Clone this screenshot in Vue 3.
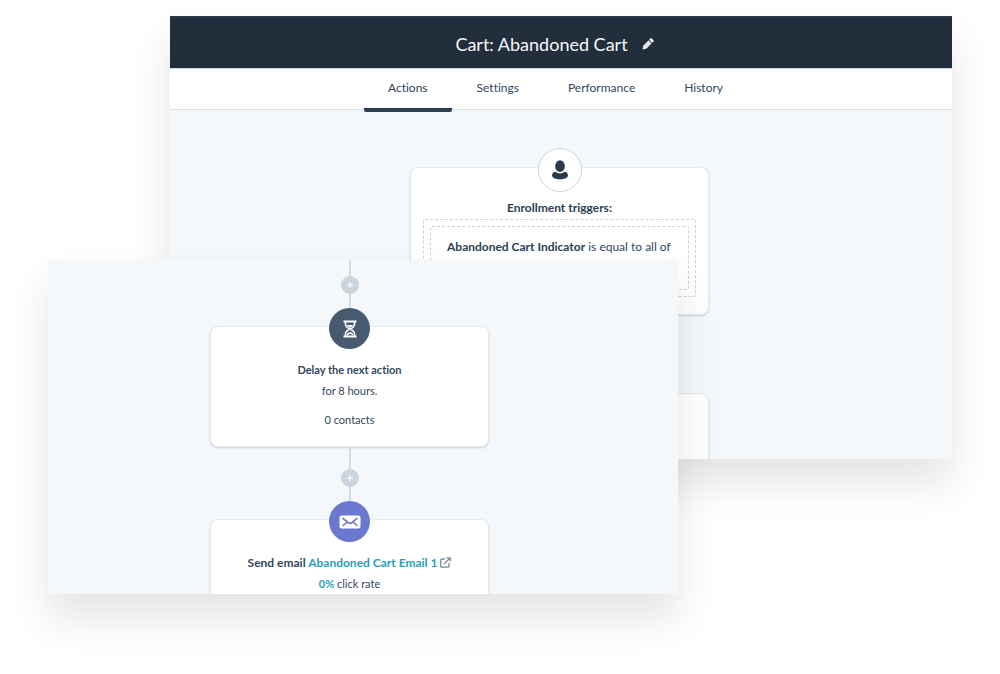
<script setup>
const tabs = [
  { label: 'Actions', active: true },
  { label: 'Settings', active: false },
  { label: 'Performance', active: false },
  { label: 'History', active: false },
]
</script>

<template>
  <main class="stage">
    <section class="panel workflow">
      <header class="title-bar">
        <h1>Cart: Abandoned Cart</h1>
        <button class="edit" type="button" aria-label="Edit name">
          <svg viewBox="0 0 12 12" width="12" height="12">
            <path d="M.5 11.500l1-4 5-5 3 3-5 5z" fill="#fff" />
            <path d="M7.200 1.800l1-1c.6-.6 1.300-.6 1.900 0l1.100 1.100c.6.6.6 1.300 0 1.900l-1 1z" fill="#fff" />
            <path d="M3 8l4.200-4.200M4.200 9.200L8.400 5" stroke="#8792a0" stroke-width=".6" />
          </svg>
        </button>
      </header>
      <nav class="tabs">
        <a v-for="tab in tabs" :key="tab.label" href="#" :class="{ active: tab.active }">{{ tab.label }}</a>
      </nav>
      <div class="canvas">
        <article class="card trigger">
          <span class="badge person">
            <svg viewBox="0 0 18 20" width="18" height="20">
              <ellipse cx="9" cy="6.200" rx="4.800" ry="5.900" fill="#2b3b4d" />
              <path d="M1 15.500c0-2.200 1.500-3.500 3.600-3.700 2.500 2.100 6.300 2.100 8.800 0 2.100.2 3.600 1.500 3.600 3.700 0 2.400-3.800 3.700-8 3.700s-8-1.300-8-3.700z" fill="#2b3b4d" />
            </svg>
          </span>
          <h2>Enrollment triggers:</h2>
          <div class="group">
            <p class="rule"><strong>Abandoned Cart Indicator</strong> is equal to all of</p>
          </div>
        </article>
        <article class="card following"></article>
      </div>
    </section>

    <section class="panel flow">
      <div class="link first">
        <button class="add" type="button" aria-label="Add action">
          <svg viewBox="0 0 18 18" width="18" height="18"><path d="M9 6v6M6 9h6" stroke="#f5f8fa" stroke-width="1.500" /></svg>
        </button>
      </div>
      <article class="card step">
        <span class="badge delay">
          <svg viewBox="0 0 16 18" width="16" height="18" fill="none" stroke="#fff">
            <path d="M1.500 1.500h13M1.500 16.500h13" stroke-width="2" />
            <path d="M3.500 2v2.200c0 2 1.500 3.500 4.500 4.800 3 1.300 4.500 2.800 4.500 4.800V16M12.500 2v2.200c0 2-1.500 3.500-4.500 4.800-3 1.300-4.500 2.800-4.500 4.800V16" stroke-width="1.600" />
            <path d="M4.500 5h7L8 8z" fill="#fff" stroke="none" />
            <path d="M5.500 15.500c0-3.500 5-3.500 5 0" stroke-width="1.500" />
          </svg>
        </span>
        <h2>Delay the next action</h2>
        <p>for 8 hours.</p>
        <p class="contacts">0 contacts</p>
      </article>
      <div class="link">
        <button class="add" type="button" aria-label="Add action">
          <svg viewBox="0 0 18 18" width="18" height="18"><path d="M9 6v6M6 9h6" stroke="#f5f8fa" stroke-width="1.500" /></svg>
        </button>
      </div>
      <article class="card step">
        <span class="badge email">
          <svg viewBox="0 0 22 14" width="22" height="14">
            <rect x=".5" y=".5" width="21" height="13" rx="2" fill="#fff" />
            <path d="M3.500 3.200l5.500 4.300c1.300 1 2.700 1 4 0l5.500-4.300M3.500 11l4-3.500M18.500 11l-4-3.500" fill="none" stroke="#6a78d1" stroke-width="1.600" />
          </svg>
        </span>
        <h2 class="email-title">
          Send email <a href="#">Abandoned Cart Email 1
            <svg viewBox="0 0 11 11" width="11" height="11" fill="none" stroke="#7c8998" stroke-width="1.300">
              <path d="M5 2H1.700Q.8 2 .8 2.900v6.400q0 .9.900.9h6.400q.9 0 .9-.9V6M4 7L10 1M6.500.8h3.700v3.700" />
            </svg>
          </a>
        </h2>
        <p><b>0%</b> click rate</p>
      </article>
    </section>
  </main>
</template>

<style>
body {
  margin: 0;
  background: #fff;
}
</style>

<style scoped>
.stage {
  display: grid;
  grid-template-columns: 122fr 508fr 274fr;
  grid-template-rows: 244px 199px 135px;
  padding: 16px 48px 80px;
  font: 12px/20px Lato, "Liberation Sans", sans-serif;
  font-variant-ligatures: none;
  color: #33475b;
}
.panel {
  min-width: 0;
  min-height: 0;
  overflow: hidden;
  display: flex;
  flex-direction: column;
  background: #f4f8fb;
  box-shadow: 0 24px 40px rgba(0, 0, 0, 0.11);
}
.workflow {
  grid-area: 1 / 2 / 3 / 4;
}
.flow {
  grid-area: 2 / 1 / 4 / 3;
  z-index: 1;
  align-items: center;
  padding-right: 27px;
}
h1, h2, p {
  margin: 0;
  font-size: inherit;
}
.title-bar {
  flex: none;
  display: flex;
  align-items: center;
  justify-content: center;
  gap: 14px;
  height: 52px;
  padding: 2px 13px 0 0;
  box-sizing: border-box;
  background: #222e3c;
  border-top: 2px solid #2b3948;
}
h1 {
  font-size: 18px;
  line-height: 24px;
  font-weight: 400;
  color: #f5f8fa;
}
button {
  display: flex;
  padding: 0;
  border: 0;
  background: none;
  cursor: pointer;
}
.tabs {
  flex: none;
  display: flex;
  justify-content: center;
  gap: 1px;
  height: 42px;
  padding-right: 11px;
  box-sizing: border-box;
  background: #fff;
  border-top: 1px solid #cbd6e2;
  border-bottom: 1px solid #d6dfe6;
}
.tabs a {
  height: 43px;
  padding: 9px 24px 0;
  box-sizing: border-box;
  color: #33475b;
  text-decoration: none;
}
.tabs .active {
  border-bottom: 4px solid #2d3e50;
  border-radius: 2px;
  color: #2d3e50;
}
.canvas {
  flex: 1;
  min-height: 0;
  display: flex;
  flex-direction: column;
  align-items: center;
  gap: 78px;
  padding: 57px 3px 0 0;
}
.card {
  flex: none;
  display: flex;
  flex-direction: column;
  align-items: center;
  box-sizing: border-box;
  background: #fff;
  border: 1px solid #e4eaef;
  border-radius: 8px;
  box-shadow: 0 1px 2px rgba(45, 62, 80, 0.2);
}
.trigger {
  width: 299px;
  padding: 0 12px 17px;
}
.following {
  width: 299px;
  height: 120px;
}
.badge {
  display: flex;
  align-items: center;
  justify-content: center;
  box-sizing: border-box;
  width: 41px;
  height: 41px;
  margin-top: -19px;
  border-radius: 50%;
}
.person {
  width: 44px;
  height: 44px;
  margin-top: -20px;
  border: 1px solid #cbd6e2;
  background: #fff;
}
.delay {
  background: #475a6f;
}
.email {
  background: #6a78d1;
}
.trigger h2 {
  margin: 6px 0 1px;
  color: #2d3e50;
}
.group {
  align-self: stretch;
  padding: 6px;
  border: 1px dashed #cbd3da;
  border-radius: 2px;
}
.rule {
  height: 64px;
  padding: 10px 0 0 16px;
  box-sizing: border-box;
  border: 1px dashed #cbd3da;
  border-radius: 2px;
  white-space: nowrap;
}
.rule strong {
  color: #2d3e50;
}
.link {
  flex: none;
  display: flex;
  align-items: center;
  justify-content: center;
  width: 18px;
  height: 72px;
  padding-bottom: 10px;
  box-sizing: border-box;
  background: linear-gradient(#d0dae2, #d0dae2) center / 2px 100% no-repeat;
}
.first {
  height: 66px;
  padding-bottom: 16px;
}
.add {
  border-radius: 50%;
  background: #cbd5dd;
}
.step {
  width: 279px;
  padding-bottom: 16px;
  font-size: 11px;
  line-height: 21px;
}
.step h2 {
  margin-top: 10px;
}
.step .email-title {
  font-size: 12px;
}
.contacts {
  margin-top: 8px;
}
.step a, .step b {
  color: #2a9fb8;
  text-decoration: none;
}
.step a svg {
  vertical-align: -1px;
}
</style>
